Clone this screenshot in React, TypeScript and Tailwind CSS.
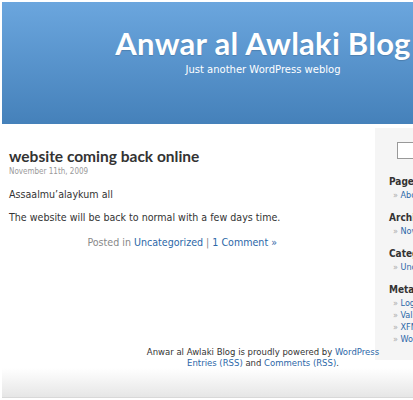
import React from "react";

const sideLinks = [
  { title: "Pages", items: ["About"] },
  { title: "Archives", items: ["November 2009"] },
  { title: "Categories", items: ["Uncategorized"] },
  { title: "Meta", items: ["Log in", "Valid XHTML", "XFN", "WordPress"] },
];

export default function App() {
  return (
    <div className="w-[413px] h-[400px] overflow-hidden bg-white relative font-['DejaVu_Sans_Condensed','DejaVu_Sans',sans-serif]">
      <div className="w-[522px] ml-[2px] pt-[2px]">
        {/* Header */}
        <div className="h-[122px] bg-gradient-to-b from-[#6ba6de] to-[#4581ba] text-center text-white pt-[24px]">
          <h1 className="text-[31px] leading-[35px] font-bold font-['Lato',sans-serif] tracking-[0.25px] [text-shadow:0_1px_1px_rgba(0,0,0,0.15)]">
            Anwar al Awlaki Blog
          </h1>
          <p className="text-[10px] leading-[12px] mt-[3px] font-['DejaVu_Sans',sans-serif]">
            Just another WordPress weblog
          </p>
        </div>

        {/* Body */}
        <div className="flex">
          <div className="w-[373px] pl-[7px] pt-[22px]">
            <div className="w-[276px]">
              <h2 className="text-[15.5px] leading-[20px] font-bold text-[#333] font-['Lato',sans-serif]">
                website coming back online
              </h2>
              <p className="text-[8px] leading-[10px] text-[#999] mt-[1px]">November 11th, 2009</p>
              <div className="text-[10.6px] leading-[14px] text-[#333] mt-[10px] space-y-[9px] whitespace-nowrap">
                <p>Assaalmu’alaykum all</p>
                <p>The website will be back to normal with a few days time.</p>
              </div>
              <p className="text-[10.6px] leading-[14px] text-[#888] text-right mt-[11px] pr-[8px] whitespace-nowrap">
                Posted in <span className="text-[#2c67a8]">Uncategorized</span> |{" "}
                <span className="text-[#2c67a8]">1 Comment »</span>
              </p>
            </div>
          </div>

          <div className="w-[147px] h-[232px] mt-[4px] bg-[#f5f5f5] pl-[14px] pt-[14px]">
            <div className="ml-[8px] w-[110px] h-[17px] border border-[#999] bg-white" />
            <div className="mt-[16px] space-y-[10px]">
              {sideLinks.map((s) => (
                <div key={s.title}>
                  <h3 className="text-[10px] leading-[13px] font-bold text-[#333]">{s.title}</h3>
                  <ul className="pl-[4px] mt-[1px]">
                    {s.items.map((it) => (
                      <li key={it} className="text-[9px] leading-[12px] text-[#2c67a8]">
                        <span className="text-[#aaa]">»</span> {it}
                      </li>
                    ))}
                  </ul>
                </div>
              ))}
            </div>
          </div>
        </div>

        {/* Footer */}
        <div className="mt-[-13px] text-center text-[8.5px] leading-[10.5px] text-[#333] font-['DejaVu_Sans',sans-serif]">
          <p>
            Anwar al Awlaki Blog is proudly powered by <span className="text-[#2c67a8]">WordPress</span>
          </p>
          <p>
            <span className="text-[#2c67a8]">Entries (RSS)</span> and{" "}
            <span className="text-[#2c67a8]">Comments (RSS)</span>.
          </p>
        </div>
        <div className="h-[30px] bg-gradient-to-b from-white to-[#e6e6e6] border-b border-[#d8d8d8]" />
      </div>
    </div>
  );
}
